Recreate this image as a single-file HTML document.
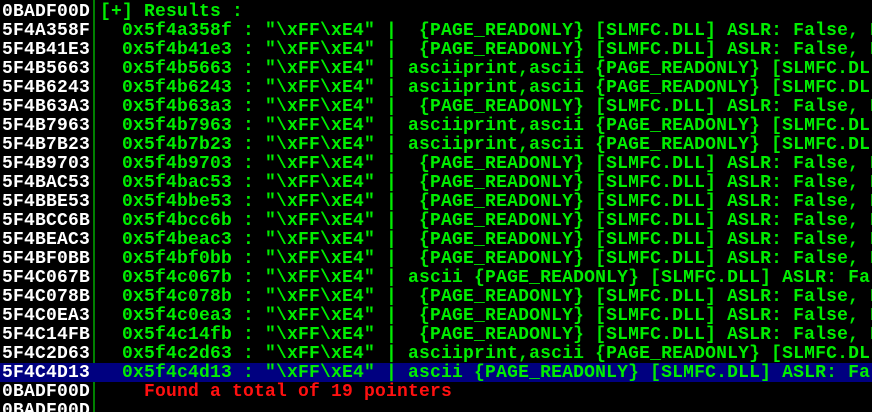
<!DOCTYPE html>
<html><head><style>
html,body{margin:0;padding:0;background:#000;width:872px;height:412px;overflow:hidden}
.w{position:relative;width:872px;height:412px;overflow:hidden;font-family:"Liberation Mono",monospace;font-weight:bold;font-size:18px;letter-spacing:0.2px}
.r{position:absolute;left:0;height:19px;line-height:19px;width:872px;white-space:pre}
.a{position:absolute;left:2px;top:1px;color:#fff}
.t{position:absolute;left:100px;top:1px;color:#00ee00}
.sel{background:#000080}
.red{color:#ff1010}
.sep{position:absolute;left:93px;top:0;width:2px;height:412px;background:#008000}
</style></head><body><div class="w">
<div class="sep"></div>
<div class="r" style="top:2px"><span class="a">0BADF00D</span><span class="t">[+] Results :</span></div>
<div class="r" style="top:21px"><span class="a">5F4A358F</span><span class="t">  0x5f4a358f : "\xFF\xE4" |  {PAGE_READONLY} [SLMFC.DLL] ASLR: False, R</span></div>
<div class="r" style="top:40px"><span class="a">5F4B41E3</span><span class="t">  0x5f4b41e3 : "\xFF\xE4" |  {PAGE_READONLY} [SLMFC.DLL] ASLR: False, R</span></div>
<div class="r" style="top:59px"><span class="a">5F4B5663</span><span class="t">  0x5f4b5663 : "\xFF\xE4" | asciiprint,ascii {PAGE_READONLY} [SLMFC.DLL]</span></div>
<div class="r" style="top:78px"><span class="a">5F4B6243</span><span class="t">  0x5f4b6243 : "\xFF\xE4" | asciiprint,ascii {PAGE_READONLY} [SLMFC.DLL]</span></div>
<div class="r" style="top:97px"><span class="a">5F4B63A3</span><span class="t">  0x5f4b63a3 : "\xFF\xE4" |  {PAGE_READONLY} [SLMFC.DLL] ASLR: False, R</span></div>
<div class="r" style="top:116px"><span class="a">5F4B7963</span><span class="t">  0x5f4b7963 : "\xFF\xE4" | asciiprint,ascii {PAGE_READONLY} [SLMFC.DLL]</span></div>
<div class="r" style="top:135px"><span class="a">5F4B7B23</span><span class="t">  0x5f4b7b23 : "\xFF\xE4" | asciiprint,ascii {PAGE_READONLY} [SLMFC.DLL]</span></div>
<div class="r" style="top:154px"><span class="a">5F4B9703</span><span class="t">  0x5f4b9703 : "\xFF\xE4" |  {PAGE_READONLY} [SLMFC.DLL] ASLR: False, R</span></div>
<div class="r" style="top:173px"><span class="a">5F4BAC53</span><span class="t">  0x5f4bac53 : "\xFF\xE4" |  {PAGE_READONLY} [SLMFC.DLL] ASLR: False, R</span></div>
<div class="r" style="top:192px"><span class="a">5F4BBE53</span><span class="t">  0x5f4bbe53 : "\xFF\xE4" |  {PAGE_READONLY} [SLMFC.DLL] ASLR: False, R</span></div>
<div class="r" style="top:211px"><span class="a">5F4BCC6B</span><span class="t">  0x5f4bcc6b : "\xFF\xE4" |  {PAGE_READONLY} [SLMFC.DLL] ASLR: False, R</span></div>
<div class="r" style="top:230px"><span class="a">5F4BEAC3</span><span class="t">  0x5f4beac3 : "\xFF\xE4" |  {PAGE_READONLY} [SLMFC.DLL] ASLR: False, R</span></div>
<div class="r" style="top:249px"><span class="a">5F4BF0BB</span><span class="t">  0x5f4bf0bb : "\xFF\xE4" |  {PAGE_READONLY} [SLMFC.DLL] ASLR: False, R</span></div>
<div class="r" style="top:268px"><span class="a">5F4C067B</span><span class="t">  0x5f4c067b : "\xFF\xE4" | ascii {PAGE_READONLY} [SLMFC.DLL] ASLR: Fal</span></div>
<div class="r" style="top:287px"><span class="a">5F4C078B</span><span class="t">  0x5f4c078b : "\xFF\xE4" |  {PAGE_READONLY} [SLMFC.DLL] ASLR: False, R</span></div>
<div class="r" style="top:306px"><span class="a">5F4C0EA3</span><span class="t">  0x5f4c0ea3 : "\xFF\xE4" |  {PAGE_READONLY} [SLMFC.DLL] ASLR: False, R</span></div>
<div class="r" style="top:325px"><span class="a">5F4C14FB</span><span class="t">  0x5f4c14fb : "\xFF\xE4" |  {PAGE_READONLY} [SLMFC.DLL] ASLR: False, R</span></div>
<div class="r" style="top:344px"><span class="a">5F4C2D63</span><span class="t">  0x5f4c2d63 : "\xFF\xE4" | asciiprint,ascii {PAGE_READONLY} [SLMFC.DLL]</span></div>
<div class="r sel" style="top:363px"><span class="a">5F4C4D13</span><span class="t">  0x5f4c4d13 : "\xFF\xE4" | ascii {PAGE_READONLY} [SLMFC.DLL] ASLR: Fal</span></div>
<div class="r" style="top:382px"><span class="a">0BADF00D</span><span class="t red">    Found a total of 19 pointers</span></div>
<div class="r" style="top:401px"><span class="a">0BADF00D</span></div>
</div></body></html>
